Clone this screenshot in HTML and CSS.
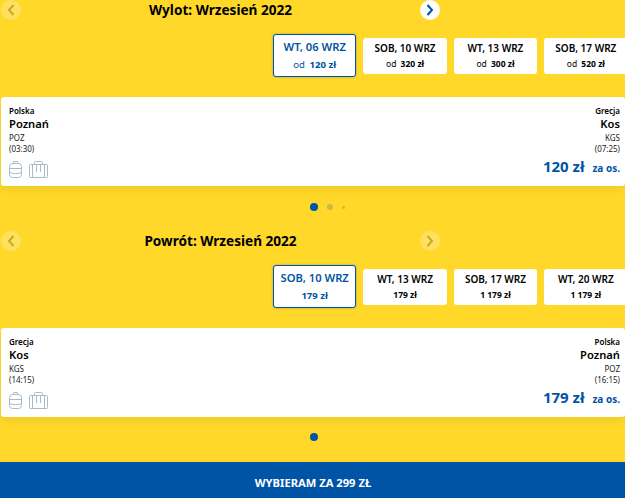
FILE: index.html
```html
<!DOCTYPE html>
<html lang="pl">
<head>
  <meta charset="UTF-8">
  <title>Wybór lotu</title>
  <link rel="stylesheet" href="styles.css">
</head>
<body>

  <svg class="icon-defs" width="0" height="0">
    <symbol id="icon-backpack" viewBox="0 0 13 17">
      <path d="M4 2.5V1.5a1 1 0 0 1 1-1h3a1 1 0 0 1 1 1v1"/>
      <rect x="0.5" y="2.5" width="12" height="14" rx="3"/>
      <path d="M0.5 7.5h12M0.5 11.5c3 1.5 9 1.5 12 0"/>
    </symbol>
    <symbol id="icon-suitcase" viewBox="0 0 19 17">
      <path d="M5.5 3.5V1.5a1 1 0 0 1 1-1h6a1 1 0 0 1 1 1v2"/>
      <rect x="0.5" y="3.5" width="18" height="13" rx="1"/>
      <path d="M3.5 3.5v13M15.5 3.5v13M7.5 4v7M11.5 4v7"/>
    </symbol>
  </svg>

  <!-- Wylot -->
  <section class="leg leg-out">
    <div class="month-nav">
      <button class="arrow arrow-off"><svg viewBox="0 0 10 14"><path d="M7.5 2 3 7l4.5 5"/></svg></button>
      <h2>Wylot: Wrzesień 2022</h2>
      <button class="arrow"><svg viewBox="0 0 10 14"><path d="M2.5 2 7 7l-4.5 5"/></svg></button>
    </div>

    <div class="dates">
      <div class="date active"><b>WT, 06 WRZ</b><span><i>od</i> 120 zł</span></div>
      <div class="date"><b>SOB, 10 WRZ</b><span><i>od</i> 320 zł</span></div>
      <div class="date"><b>WT, 13 WRZ</b><span><i>od</i> 300 zł</span></div>
      <div class="date"><b>SOB, 17 WRZ</b><span><i>od</i> 520 zł</span></div>
    </div>

    <div class="flight">
      <div class="place">
        <p class="country">Polska</p>
        <p class="city">Poznań</p>
        <p class="code">POZ</p>
        <p class="code">(03:30)</p>
        <div class="bags">
          <svg class="bag"><use href="#icon-backpack"/></svg>
          <svg class="case"><use href="#icon-suitcase"/></svg>
        </div>
      </div>
      <div class="place place-right">
        <p class="country">Grecja</p>
        <p class="city">Kos</p>
        <p class="code">KGS</p>
        <p class="code">(07:25)</p>
        <p class="price">120 zł <small>za os.</small></p>
      </div>
    </div>

    <div class="dots dots-three">
      <span class="dot dot-on"></span>
      <span class="dot dot-mid"></span>
      <span class="dot dot-far"></span>
    </div>
  </section>

  <!-- Powrót -->
  <section class="leg leg-back">
    <div class="month-nav">
      <button class="arrow arrow-off"><svg viewBox="0 0 10 14"><path d="M7.5 2 3 7l4.5 5"/></svg></button>
      <h2>Powrót: Wrzesień 2022</h2>
      <button class="arrow arrow-off"><svg viewBox="0 0 10 14"><path d="M2.5 2 7 7l-4.5 5"/></svg></button>
    </div>

    <div class="dates">
      <div class="date active"><b>SOB, 10 WRZ</b><span>179 zł</span></div>
      <div class="date"><b>WT, 13 WRZ</b><span>179 zł</span></div>
      <div class="date"><b>SOB, 17 WRZ</b><span>1 179 zł</span></div>
      <div class="date"><b>WT, 20 WRZ</b><span>1 179 zł</span></div>
    </div>

    <div class="flight">
      <div class="place">
        <p class="country">Grecja</p>
        <p class="city">Kos</p>
        <p class="code">KGS</p>
        <p class="code">(14:15)</p>
        <div class="bags">
          <svg class="bag"><use href="#icon-backpack"/></svg>
          <svg class="case"><use href="#icon-suitcase"/></svg>
        </div>
      </div>
      <div class="place place-right">
        <p class="country">Polska</p>
        <p class="city">Poznań</p>
        <p class="code">POZ</p>
        <p class="code">(16:15)</p>
        <p class="price">179 zł <small>za os.</small></p>
      </div>
    </div>

    <div class="dots">
      <span class="dot dot-on"></span>
    </div>
  </section>

  <button class="confirm">WYBIERAM ZA 299 ZŁ</button>

</body>
</html>
```

FILE: styles.css
```css
* {
  box-sizing: border-box;
}
body {
  margin: 0;
  width: 625px;
  height: 498px;
  overflow: hidden;
  background-color: #ffd829;
  font-family: "Noto Sans", Arial, sans-serif;
  color: #000;
}
p, h2 {
  margin: 0;
}
.icon-defs {
  position: absolute;
}

.leg-back {
  margin-top: 19px;
}

/* Month header */
.month-nav {
  display: flex;
  justify-content: space-between;
  align-items: center;
  width: 438px;
  height: 20px;
  margin-left: 1px;
}
.arrow:last-child {
  margin-right: -1px;
}
.month-nav h2 {
  font-size: 13.6px;
  font-weight: 700;
  line-height: 20px;
}
.arrow {
  display: flex;
  justify-content: center;
  align-items: center;
  width: 20px;
  height: 20px;
  padding: 0;
  border: none;
  border-radius: 50%;
  background-color: white;
}
.arrow svg {
  width: 10px;
  height: 14px;
  fill: none;
  stroke: #0054a6;
  stroke-width: 2;
}
.arrow-off {
  opacity: 0.25;
}
.arrow-off svg {
  stroke: #222;
}

/* Date strip */
.dates {
  display: flex;
  align-items: center;
  gap: 7px;
  height: 43px;
  margin-top: 14px;
  padding-left: 273px;
}
.date {
  flex: 0 0 83.4px;
  display: flex;
  flex-direction: column;
  justify-content: center;
  align-items: center;
  height: 36px;
  background: white;
  border-radius: 3px;
  white-space: nowrap;
}
.date b {
  font-size: 10px;
  font-weight: 600;
  line-height: 14px;
}
.date span {
  margin-top: 3px;
  font-size: 8.5px;
  font-weight: 700;
  line-height: 12px;
}
.date i {
  font-style: normal;
  font-weight: 400;
  margin-right: 2px;
}
.date.active {
  height: 43px;
  border: 1px solid #0054a6;
  box-shadow: 0 0 2px rgba(0, 84, 166, 0.5);
  color: #0054a6;
}
.date.active b {
  font-size: 11.2px;
}
.date.active span {
  font-size: 9.6px;
  margin-top: 5px;
}

/* Flight card */
.flight {
  display: flex;
  justify-content: space-between;
  height: 89px;
  margin: 20px 0 0 1px;
  padding: 8px 5px 0 8px;
  background: white;
  border-radius: 3px;
  box-shadow: 0 4px 8px rgba(0, 0, 0, 0.06);
}
.place-right {
  text-align: right;
}
.country {
  font-size: 8px;
  font-weight: 600;
  line-height: 11px;
}
.city {
  font-size: 11.2px;
  font-weight: 600;
  line-height: 15px;
  margin-bottom: 1px;
}
.code {
  font-size: 8px;
  line-height: 11px;
  color: #222;
}
.bags {
  display: flex;
  align-items: flex-end;
  gap: 7px;
  margin-top: 7px;
}
.bags svg {
  fill: none;
  stroke: #a9bacb;
  stroke-width: 1;
}
.bag {
  width: 13px;
  height: 17px;
}
.case {
  width: 19px;
  height: 17px;
}
.price {
  margin-top: 1px;
  font-size: 15px;
  font-weight: 700;
  line-height: 22px;
  color: #0054a6;
}
.price small {
  margin-left: 4px;
  font-size: 10px;
}

/* Pager */
.dots {
  display: flex;
  justify-content: center;
  align-items: center;
  gap: 9px;
  height: 10px;
  margin-top: 15px;
  padding-left: 3px;
}
.dots-three {
  margin-top: 16px;
  padding-left: 29px;
}
.dot {
  border-radius: 50%;
}
.dot-on {
  width: 8px;
  height: 8px;
  background-color: #0054a6;
}
.dot-mid {
  width: 6px;
  height: 6px;
  background-color: #c9b84a;
}
.dot-far {
  width: 3px;
  height: 3px;
  background-color: #c9b84a;
}

.confirm {
  display: block;
  width: 100%;
  height: 36px;
  margin-top: 20px;
  padding: 4px 0 0 1px;
  border: none;
  background-color: #0054a6;
  color: white;
  font-family: inherit;
  font-size: 11.2px;
  font-weight: 700;
}
```
